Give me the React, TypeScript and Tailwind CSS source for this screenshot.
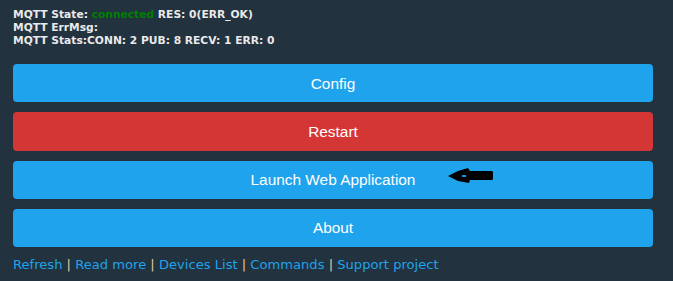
const buttons = [
  { label: "Config", color: "bg-[#1fa3ec]" },
  { label: "Restart", color: "bg-[#d43535]" },
  { label: "Launch Web Application", color: "bg-[#1fa3ec]", arrow: true },
  { label: "About", color: "bg-[#1fa3ec]" },
];

const links = ["Refresh", "Read more", "Devices List", "Commands", "Support project"];

function PointerArrow() {
  return (
    <svg
      className="absolute left-[435px] top-[6px]"
      width="46"
      height="18"
      viewBox="0 0 46 18"
    >
      <path d="M0 9 L10 4 L20 1 L22 4 L44 4 L45 5 L45 12 L44 13 L22 13 L21 16 L10 14 Z" fill="#000" />
      <ellipse cx="16" cy="9" rx="2.5" ry="1" fill="#1fa3ec" />
    </svg>
  );
}

export default function App() {
  return (
    <div className="min-h-[281px] w-full bg-[#22323f] pl-[13px] pr-[20px] pt-[8px] font-['Liberation_Sans',sans-serif]">
      <div className="font-['DejaVu_Sans',sans-serif] text-[10.7px] font-bold leading-[13px] text-[#eaeaea]">
        <div>
          MQTT State: <span className="text-[#008000]">connected</span> RES: 0(ERR_OK)
        </div>
        <div>MQTT ErrMsg:</div>
        <div>MQTT Stats:CONN: 2 PUB: 8 RECV: 1 ERR: 0</div>
      </div>

      <div className="mt-[17px] flex flex-col gap-[10px]">
        {buttons.map((b) => (
          <div
            key={b.label}
            className={`relative flex h-[38.3px] items-center justify-center rounded-[4px] ${b.color} text-[15.4px] text-white`}
          >
            {b.label}
            {b.arrow && <PointerArrow />}
          </div>
        ))}
      </div>

      <div className="mt-[9px] whitespace-nowrap font-['DejaVu_Sans',sans-serif] text-[13.1px] leading-[18px]">
        {links.map((l, i) => (
          <span key={l}>
            {i > 0 && <span className="text-[#e0c9a0]"> | </span>}
            <span className="text-[#1fa3ec]">{l}</span>
          </span>
        ))}
      </div>
    </div>
  );
}
